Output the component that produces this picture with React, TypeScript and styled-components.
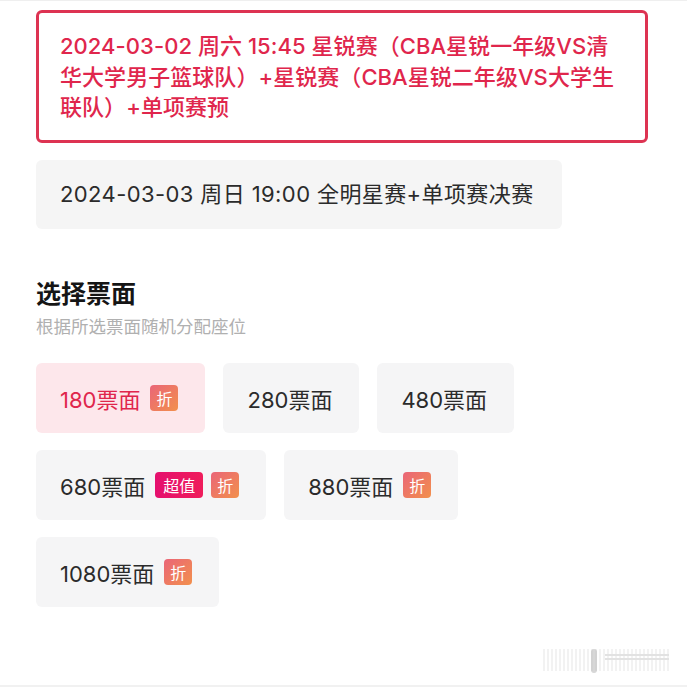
import React from 'react';
import styled, { createGlobalStyle } from 'styled-components';

const GlobalStyle = createGlobalStyle`
    html, body {
        margin: 0;
        padding: 0;
        background: #ffffff;
    }
    body {
        font-family: Inter, "Noto Sans CJK SC", sans-serif;
        -webkit-font-smoothing: antialiased;
    }
`;

const Page = styled.div`
    position: relative;
    box-sizing: border-box;
    height: 687px;
    padding: 9px 39px 0 36px;
    border-top: 1px solid #efefef;
    border-bottom: 2px solid #f1f1f1;
    overflow: hidden;
`;

const Sessions = styled.div`
    display: flex;
    flex-direction: column;
    align-items: flex-start;
    gap: 17px;
`;

const SessionCard = styled.div<{ $active?: boolean }>`
    box-sizing: border-box;
    border-radius: 6px;
    font-size: 22px;
    line-height: 30.5px;
    ${({ $active }) => $active
        ? `
        width: 612px;
        padding: 18px 21px 17px 21px;
        border: 3px solid #dd3352;
        color: #e0264c;
        background: #fff;
        font-weight: 500;
        letter-spacing: 0.05px;
        `
        : `
        padding: 0 28px 0 24px;
        height: 69px;
        display: flex;
        align-items: center;
        background: #f5f5f5;
        color: #2b2b2b;
        letter-spacing: 0.4px;
        `}
`;

const Line = styled.div`
    white-space: nowrap;
`;

const SectionTitle = styled.h2`
    margin: 49px 0 0;
    font-size: 25px;
    line-height: 32px;
    font-weight: 700;
    color: #151515;
`;

const SectionHint = styled.p`
    margin: 5px 0 0;
    font-size: 17.5px;
    line-height: 24px;
    color: #b0b0b0;
`;

const OptionGrid = styled.div`
    display: flex;
    flex-wrap: wrap;
    gap: 17px 18px;
    margin-top: 24px;
    width: 600px;
`;

const Option = styled.div<{ $active?: boolean }>`
    box-sizing: border-box;
    height: 70px;
    padding: 0 27px 0 24px;
    display: flex;
    align-items: center;
    gap: 10px;
    border-radius: 6px;
    font-size: 22px;
    background: ${({ $active }) => ($active ? '#fde7eb' : '#f5f5f6')};
    color: ${({ $active }) => ($active ? '#e0264c' : '#2b2b2b')};
`;

const OptionLabel = styled.span``;

const Badge = styled.span<{ $kind: 'discount' | 'value' }>`
    display: inline-flex;
    align-items: center;
    justify-content: center;
    height: 26px;
    padding: 0 ${({ $kind }) => ($kind === 'value' ? '8px' : '6px')};
    border-radius: 4px;
    font-size: 16px;
    color: #fff;
    background: ${({ $kind }) => $kind === 'value'
        ? 'linear-gradient(90deg, #e5106e, #ef1d5b)'
        : 'linear-gradient(135deg, #ea6578, #f2904c)'};
`;

const Badges = styled.span`
    display: inline-flex;
    gap: 8px;
`;

const Watermark = styled.svg`
    position: absolute;
    right: 14px;
    bottom: 12px;
`;

const sessions = [
    {
        active: true,
        lines: [
            '2024-03-02 周六 15:45 星锐赛（CBA星锐一年级VS清',
            '华大学男子篮球队）+星锐赛（CBA星锐二年级VS大学生',
            '联队）+单项赛预',
        ],
    },
    {
        active: false,
        lines: ['2024-03-03 周日 19:00 全明星赛+单项赛决赛'],
    },
];

const options = [
    { label: '180票面', active: true, value: false, discount: true },
    { label: '280票面', active: false, value: false, discount: false },
    { label: '480票面', active: false, value: false, discount: false },
    { label: '680票面', active: false, value: true, discount: true },
    { label: '880票面', active: false, value: false, discount: true },
    { label: '1080票面', active: false, value: false, discount: true },
];

const App: React.FC = () => {
    return (
        <>
            <GlobalStyle />
            <Page>
                <Sessions>
                    {sessions.map((s, i) => (
                        <SessionCard key={i} $active={s.active}>
                            <div>
                                {s.lines.map((l, j) => <Line key={j}>{l}</Line>)}
                            </div>
                        </SessionCard>
                    ))}
                </Sessions>

                <SectionTitle>选择票面</SectionTitle>
                <SectionHint>根据所选票面随机分配座位</SectionHint>

                <OptionGrid>
                    {options.map((o) => (
                        <Option key={o.label} $active={o.active}>
                            <OptionLabel>{o.label}</OptionLabel>
                            {(o.value || o.discount) && (
                                <Badges>
                                    {o.value && <Badge $kind="value">超值</Badge>}
                                    {o.discount && <Badge $kind="discount">折</Badge>}
                                </Badges>
                            )}
                        </Option>
                    ))}
                </OptionGrid>

                {/* faint watermark in the corner */}
                <Watermark width="130" height="26" viewBox="0 0 130 26">
                    {Array.from({ length: 32 }).map((_, i) => (
                        <rect key={i} x={i * 4} y={2} width={2} height={22} fill="#f2f2f2" />
                    ))}
                    <rect x="48" y="2" width="6" height="24" rx="3" fill="#bdbdbd" opacity="0.6" />
                    <rect x="62" y="7" width="64" height="2" fill="#e2e2e2" />
                    <rect x="62" y="11" width="64" height="2" fill="#e2e2e2" />
                </Watermark>
            </Page>
        </>
    );
};

export default App;
